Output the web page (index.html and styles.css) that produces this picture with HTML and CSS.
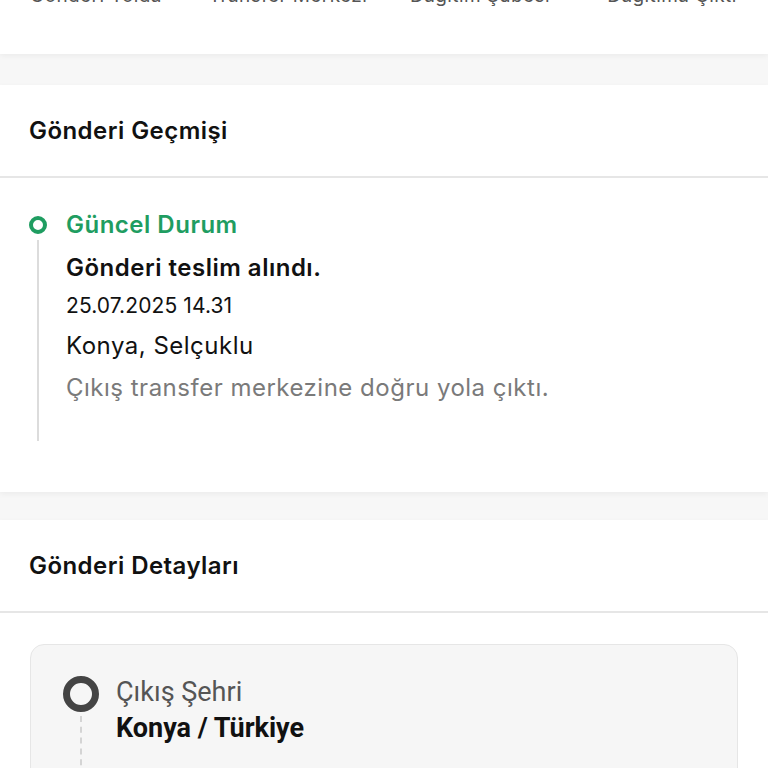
FILE: index.html
```html
<!DOCTYPE html>
<html lang="tr">
<head>
    <meta charset="UTF-8">
    <meta name="viewport" content="width=device-width, initial-scale=1.0">
    <title>Gönderi Takibi</title>
    <link rel="stylesheet" href="styles.css">
</head>
<body>

<div class="card stepper">
    <div class="step-labels">
        <span>Gönderi Yolda</span>
        <span>Transfer Merkezi</span>
        <span>Dağıtım Şubesi</span>
        <span>Dağıtıma Çıktı</span>
    </div>
</div>

<div class="card history-card">
    <div class="card-header">Gönderi Geçmişi</div>
    <div class="history">
        <div class="history-item">
            <div class="marker">
                <span class="dot"></span>
                <span class="line"></span>
            </div>
            <div class="history-text">
                <div class="status">Güncel Durum</div>
                <div class="title">Gönderi teslim alındı.</div>
                <div class="date">25.07.2025 14.31</div>
                <div class="place">Konya, Selçuklu</div>
                <div class="note">Çıkış transfer merkezine doğru yola çıktı.</div>
            </div>
        </div>
    </div>
</div>

<div class="card">
    <div class="card-header">Gönderi Detayları</div>
    <div class="details">
        <div class="route-box">
            <div class="route-item">
                <div class="route-marker">
                    <span class="ring"></span>
                    <span class="dash"></span>
                </div>
                <div class="route-text">
                    <div class="route-label">Çıkış Şehri</div>
                    <div class="route-value">Konya / Türkiye</div>
                </div>
            </div>
        </div>
    </div>
</div>

</body>
</html>
```

FILE: styles.css
```css
body {
    margin: 0;
    background-color: #f7f7f7;
    font-family: Inter, "Noto Sans", sans-serif;
    color: #111;
    height: 768px;
    overflow: hidden;
}

.card {
    background-color: #fff;
    box-shadow: 0 2px 6px rgba(0, 0, 0, 0.05);
}

.stepper {
    margin-top: -14px;
    height: 68px;
    margin-bottom: 31px;
}

.step-labels {
    display: grid;
    grid-template-columns: repeat(4, 1fr);
    font-size: 19px;
    line-height: 20px;
    letter-spacing: 0.4px;
    color: #555;
    text-align: center;
    white-space: nowrap;
    overflow: hidden;
}

.history-card {
    margin-bottom: 28px;
}

.card-header {
    height: 93px;
    display: flex;
    align-items: center;
    padding-left: 29px;
    font-size: 24px;
    font-weight: 600;
    letter-spacing: 0.45px;
    border-bottom: 2px solid #e6e6e6;
    box-sizing: border-box;
}

.history {
    padding: 27px 30px 51px 29px;
}

.history-item {
    display: flex;
    gap: 19px;
}

.marker {
    width: 18px;
    display: flex;
    flex-direction: column;
    align-items: center;
}

.dot {
    width: 10px;
    height: 10px;
    border: 4px solid #1f9d61;
    border-radius: 50%;
    margin-top: 11px;
}

.line {
    width: 2px;
    height: 201px;
    margin-top: 6px;
    background-color: #dcdcdc;
}

.history-text {
    font-size: 24px;
    letter-spacing: 0.5px;
    line-height: 40px;
}

.status {
    color: #1f9d61;
    font-weight: 600;
}

.title {
    font-weight: 600;
    margin-top: 3px;
}

.date {
    font-size: 21px;
    letter-spacing: 0.1px;
    line-height: 36px;
}

.place {
    line-height: 44px;
}

.note {
    color: #7a7a7a;
}

.details {
    padding: 31px 30px 0;
}

.route-box {
    background-color: #f6f6f6;
    border: 1px solid #e6e6e6;
    border-radius: 14px;
    padding: 31px 30px 30px 32px;
    height: 200px;
}

.route-item {
    display: flex;
    gap: 17px;
    font-family: Roboto, "Noto Sans", sans-serif;
}

.route-marker {
    display: flex;
    flex-direction: column;
    align-items: center;
}

.ring {
    width: 22px;
    height: 22px;
    border: 7px solid #444;
    border-radius: 50%;
}

.dash {
    height: 60px;
    border-left: 2px dashed #d4d4d4;
    margin-top: 4px;
}

.route-label {
    font-size: 27px;
    color: #555;
    line-height: 32px;
}

.route-value {
    font-size: 27px;
    font-weight: 700;
    line-height: 40px;
}
```
